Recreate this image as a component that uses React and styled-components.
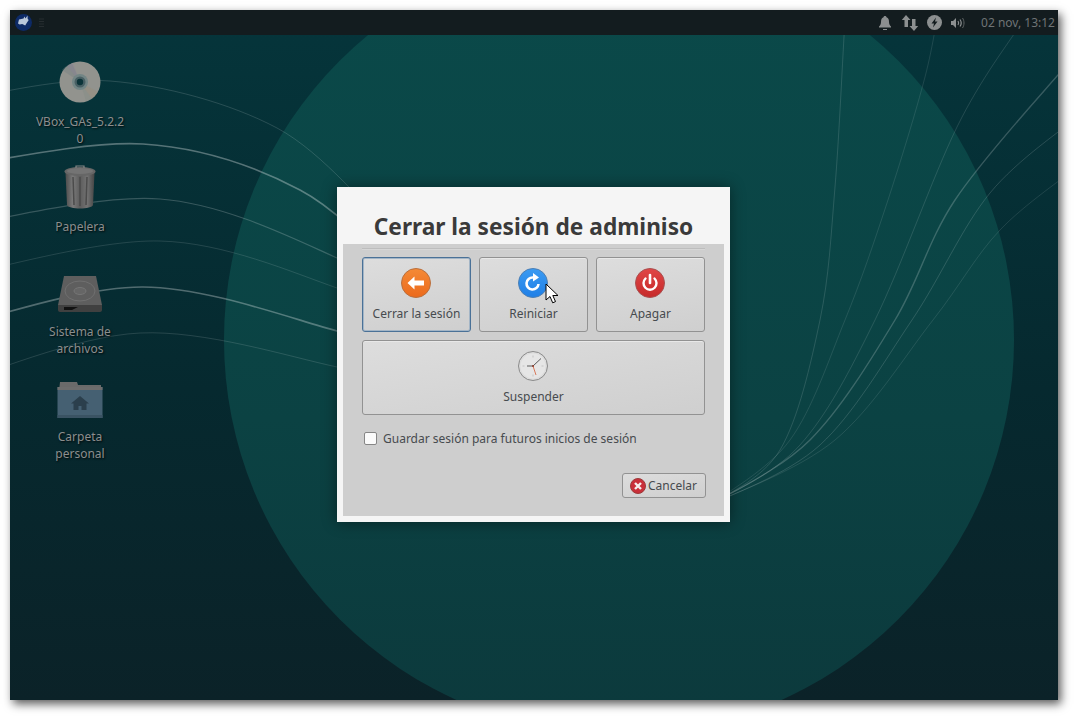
import React from "react";
import styled, { createGlobalStyle } from "styled-components";

const GlobalStyle = createGlobalStyle`
  html, body {
    margin: 0;
    padding: 0;
    background: #fff;
    overflow: hidden;
  }
`;

const Frame = styled.div`
  width: 1074px;
  height: 716px;
  padding: 10px 16px 16px 10px;
  box-sizing: border-box;
  font-family: "Noto Sans", "Open Sans", sans-serif;
`;

const Desktop = styled.div`
  position: relative;
  width: 1048px;
  height: 690px;
  display: flex;
  flex-direction: column;
  overflow: hidden;
  background: linear-gradient(180deg, #05353b 0%, #06292f 55%, #0b2228 100%);
  box-shadow: 3px 4px 9px rgba(0, 0, 0, 0.65);
`;

const Wallpaper = styled.svg`
  position: absolute;
  left: 0;
  top: 0;
`;

const Panel = styled.div`
  position: relative;
  height: 25px;
  flex: none;
  display: flex;
  align-items: center;
  justify-content: space-between;
  padding: 0 3px 0 5px;
  background: #131c1f;
`;

const PanelGroup = styled.div`
  display: flex;
  align-items: center;
  gap: ${({ $gap }) => $gap || 0}px;
`;

const Clock = styled.div`
  font-size: 12px;
  color: #6f7476;
  margin-left: 15px;
`;

const IconColumn = styled.div`
  position: relative;
  width: 100px;
  margin-left: 20px;
  padding-top: 23px;
  display: flex;
  flex-direction: column;
`;

const DesktopItem = styled.div`
  height: 105px;
  display: flex;
  flex-direction: column;
  align-items: center;
`;

const ItemIcon = styled.div`
  height: 48px;
  display: flex;
  align-items: center;
  justify-content: center;
  transform: translateY(${({ $shift }) => $shift || 0}px);
`;

const ItemLabel = styled.div`
  margin-top: 7px;
  width: 90px;
  font-size: 12px;
  line-height: 17px;
  color: #8b8e8e;
  text-align: center;
  word-break: ${({ $breakAll }) => ($breakAll ? "break-all" : "normal")};
  text-shadow: 1px 1px 2px rgba(0, 0, 0, 0.85);
`;

const Dialog = styled.div`
  position: absolute;
  left: 327px;
  top: 177px;
  width: 393px;
  height: 335px;
  box-sizing: border-box;
  padding: 0 6px 6px;
  display: flex;
  flex-direction: column;
  background: #f5f5f5;
  box-shadow: 0 0 14px rgba(0, 0, 0, 0.45);
`;

const Title = styled.div`
  height: 57px;
  flex: none;
  box-sizing: border-box;
  padding-top: 23px;
  font-size: 22.7px;
  line-height: 34px;
  font-weight: 700;
  text-align: center;
  color: #3a3a3a;
  white-space: nowrap;
`;

const DialogBody = styled.div`
  flex: 1;
  box-sizing: border-box;
  padding: 4px 19px 0;
  display: flex;
  flex-direction: column;
  background: #cecece;
`;

const Separator = styled.div`
  height: 1px;
  background: #bdbdbd;
  border-bottom: 1px solid #d6d6d6;
  margin-bottom: 7px;
`;

const ActionGrid = styled.div`
  display: grid;
  grid-template-columns: repeat(3, 109px);
  grid-auto-rows: 75px;
  gap: 8px;
`;

const ActionButton = styled.div`
  grid-column: ${({ $wide }) => ($wide ? "1 / -1" : "auto")};
  box-sizing: border-box;
  display: flex;
  flex-direction: column;
  align-items: center;
  padding-top: 10px;
  border: 1px solid ${({ $focused }) => ($focused ? "#4a7197" : "#929292")};
  border-radius: 3px;
  background: linear-gradient(170deg, #dddddd 0%, #cfcfcf 100%);
  box-shadow: ${({ $focused }) =>
    $focused ? "inset 0 0 0 1px #a3b5c6" : "inset 0 1px 0 #e8e8e8"};

  svg {
    margin-left: -1px;
  }
`;

const ActionLabel = styled.div`
  margin-top: 7px;
  font-size: 12px;
  line-height: 17px;
  color: #474b4f;
`;

const SaveRow = styled.label`
  margin: 15px 0 0 2px;
  display: flex;
  align-items: center;
  gap: 6px;
  height: 17px;
  font-size: 12px;
  color: #474b4f;
`;

const CheckBox = styled.span`
  width: 11px;
  height: 11px;
  border: 1px solid #868686;
  border-radius: 2px;
  background: #fbfbfb;
`;

const Footer = styled.div`
  margin-top: 26px;
  margin-right: -1px;
  display: flex;
  justify-content: flex-end;
`;

const CancelButton = styled.div`
  width: 84px;
  height: 25px;
  box-sizing: border-box;
  display: flex;
  align-items: center;
  padding-left: 7px;
  gap: 2px;
  border: 1px solid #929292;
  border-radius: 3px;
  background: linear-gradient(170deg, #dddddd 0%, #cfcfcf 100%);
  font-size: 12px;
  color: #474b4f;
`;

const Pointer = styled.svg`
  position: absolute;
  left: 535px;
  top: 273px;
`;

const curves = [
  // left side, passing behind the dialog
  { p: [[-60, 92], [100, 71], [267, 118], [380, 220]], o: 0.14, w: 1 },
  { p: [[-60, 158], [133, 134], [290, 180], [400, 275]], o: 0.32, w: 1.6 },
  { p: [[-60, 218], [150, 189], [327, 248], [420, 310]], o: 0.2, w: 1.2 },
  { p: [[-60, 268], [150, 231], [327, 278], [420, 325]], o: 0.12, w: 1 },
  { p: [[-60, 318], [133, 277], [327, 321], [420, 355]], o: 0.3, w: 1.6 },
  { p: [[-60, 375], [130, 323], [327, 357], [420, 385]], o: 0.13, w: 1 },
  // right side, fanning out of the dialog
  { p: [[700, 495], [770, 440], [810, 310], [825, 177], [835, 10], [838, -20]], o: 0.13, w: 1 },
  { p: [[700, 495], [780, 430], [835, 310], [877, 193], [915, 67], [930, -10]], o: 0.1, w: 1 },
  { p: [[700, 495], [790, 435], [865, 310], [947, 117], [1010, 15]], o: 0.12, w: 1 },
  { p: [[700, 495], [800, 430], [885, 310], [945, 190], [1048, 65], [1075, 40]], o: 0.2, w: 1.4 },
  { p: [[700, 495], [810, 435], [902, 310], [980, 183], [1070, 105]], o: 0.14, w: 1 },
  { p: [[700, 495], [825, 430], [923, 310], [990, 220], [1070, 155]], o: 0.1, w: 1 },
];

// smooth line through the points (catmull-rom to bezier)
const smooth = (pts) => {
  let d = `M${pts[0][0]} ${pts[0][1]}`;
  for (let i = 0; i < pts.length - 1; i++) {
    const a = pts[i - 1] || pts[i];
    const b = pts[i];
    const c = pts[i + 1];
    const e = pts[i + 2] || c;
    d += ` C${b[0] + (c[0] - a[0]) / 6} ${b[1] + (c[1] - a[1]) / 6}, ${c[0] - (e[0] - b[0]) / 6} ${c[1] - (e[1] - b[1]) / 6}, ${c[0]} ${c[1]}`;
  }
  return d;
};

const WallpaperArt = () => (
  <Wallpaper width="1048" height="690" viewBox="0 0 1048 690">
    <defs>
      <linearGradient id="disc" x1="0" y1="0" x2="0" y2="1">
        <stop offset="0" stopColor="#0a4a4a" />
        <stop offset="0.6" stopColor="#0b4243" />
        <stop offset="1" stopColor="#0c393c" />
      </linearGradient>
    </defs>
    <circle cx="609" cy="330" r="395" fill="url(#disc)" />
    {curves.map((c, i) => (
      <path key={i} d={smooth(c.p)} fill="none" stroke="#ffffff" strokeOpacity={c.o} strokeWidth={c.w} />
    ))}
  </Wallpaper>
);

const AppMenuIcon = () => (
  <svg width="17" height="17" viewBox="0 0 17 17">
    <circle cx="8.500" cy="8.500" r="8.500" fill="#0d2a66" />
    <path d="M3 9.500l1-4 4.500-1 1-2 1 2 2-3 .2 3.500 1 1-2 3-1.500 2.500-3-1.500-2.500.5z" fill="#b9c7da" />
  </svg>
);

const Handle = () => (
  <svg width="6" height="10" viewBox="0 0 6 10">
    <path d="M0 1h5M0 3.500h5M0 6h5M0 8.500h5" stroke="#262d30" strokeWidth="1" />
  </svg>
);

const BellIcon = () => (
  <svg width="14" height="16" viewBox="0 0 14 16">
    <path d="M7 1c1 0 1.400.6 1.500 1.300C10.500 3 11 5 11 7c0 2.500 1 3.500 2 4.500V12.500H1V11.500C2 10.500 3 9.500 3 7c0-2 .5-4 2.500-4.700C5.600 1.600 6 1 7 1z" fill="#8c8f90" />
    <path d="M5 14h4v1H5z" fill="#8c8f90" />
  </svg>
);

const NetworkIcon = () => (
  <svg width="18" height="18" viewBox="0 0 18 18">
    <path d="M5 1l4.500 5H7v7H3.500V6H.8z" fill="#8c8f90" />
    <path d="M13 17l-4.500-5H11V5h3.500v7h2.700z" fill="#8c8f90" />
  </svg>
);

const PowerIcon = () => (
  <svg width="15" height="15" viewBox="0 0 15 15">
    <circle cx="7.500" cy="7.500" r="7.500" fill="#8c8f90" />
    <path d="M9 2.500L4.500 8.500H7L6 12.500l4.500-6H8z" fill="#131c1f" />
  </svg>
);

const VolumeIcon = () => (
  <svg width="16" height="14" viewBox="0 0 16 14">
    <path d="M1 5h2l3-3v10L3 9H1z" fill="#8c8f90" />
    <path d="M8 5c.8 1.200.8 2.800 0 4M10 3.500c1.400 2 1.400 5 0 7" stroke="#8c8f90" strokeWidth="1.200" fill="none" />
    <path d="M12.500 2c2 2.800 2 7.200 0 10" stroke="#5f6465" strokeWidth="1" fill="none" />
  </svg>
);

const DiscIcon = () => (
  <svg width="42" height="42" viewBox="0 0 42 42">
    <circle cx="21" cy="21" r="20.500" fill="#92938e" />
    <path d="M21 21L3 9A21 21 0 0 1 13 2.500z" fill="#6f7f82" fillOpacity="0.35" />
    <path d="M21 21L8 5A21 21 0 0 1 14 2z" fill="#8a7f9c" fillOpacity="0.3" />
    <path d="M21 21L33 38A21 21 0 0 0 39 31z" fill="#9c8a6f" fillOpacity="0.3" />
    <path d="M21 21L33 38A21 21 0 0 1 27 40z" fill="#7f8a80" fillOpacity="0.3" />
    <circle cx="21" cy="21" r="8" fill="#728585" />
    <circle cx="21" cy="21" r="5.500" fill="#486064" />
    <circle cx="21" cy="21" r="3.200" fill="#0c3439" />
  </svg>
);

const TrashIcon = () => (
  <svg width="32" height="44" viewBox="0 0 32 44">
    <defs>
      <linearGradient id="can" x1="0" y1="0" x2="1" y2="0">
        <stop offset="0" stopColor="#4c4c4c" />
        <stop offset="0.25" stopColor="#7a7a7a" />
        <stop offset="0.5" stopColor="#5c5c5c" />
        <stop offset="0.75" stopColor="#737373" />
        <stop offset="1" stopColor="#454545" />
      </linearGradient>
    </defs>
    <path d="M1.500 8L3 40c.2 2 7 3.500 13 3.500S28.800 42 29 40L30.500 8z" fill="url(#can)" />
    <path d="M9 12l1 28M16 12v29M23 12l-1 28" stroke="#4b4b4b" strokeWidth="1.500" />
    <ellipse cx="16" cy="6.500" rx="15.500" ry="4.500" fill="#666666" />
    <ellipse cx="16" cy="6" rx="13" ry="3" fill="#747474" />
    <path d="M12 3V1h8v2" fill="none" stroke="#868686" strokeWidth="1.200" />
  </svg>
);

const DriveIcon = () => (
  <svg width="46" height="38" viewBox="0 0 46 38">
    <path d="M7 1h32l6 29H1z" fill="#5e5e5e" />
    <path d="M1 30h44v5c0 1-1 2-2 2H3c-1 0-2-1-2-2z" fill="#404040" />
    <ellipse cx="23" cy="16" rx="15" ry="10" fill="none" stroke="#707070" strokeWidth="1" />
    <ellipse cx="23" cy="16" rx="6" ry="3.500" fill="#666666" stroke="#767676" />
    <path d="M7 32h14l-6 3H7z" fill="#111" />
  </svg>
);

const FolderIcon = () => (
  <svg width="46" height="38" viewBox="0 0 46 38">
    <path d="M3 1h17l1 3h23v6H2z" fill="#6a6a6a" />
    <rect x="0.500" y="6" width="45" height="31" fill="#456072" />
    <rect x="0.500" y="6" width="45" height="3" fill="#6d6d6d" />
    <rect x="0.500" y="34" width="45" height="3" fill="#3a5363" />
    <path d="M23 15l-9 7.500h2.500V29h5v-4h3v4h5v-6.500H32z" fill="#2b3f4c" />
  </svg>
);

const LogoutIcon = () => (
  <svg width="30" height="30" viewBox="0 0 30 30">
    <defs>
      <linearGradient id="orange" x1="0" y1="0" x2="0" y2="1">
        <stop offset="0" stopColor="#f48a36" />
        <stop offset="1" stopColor="#ec6a1c" />
      </linearGradient>
    </defs>
    <circle cx="15" cy="15" r="14.500" fill="url(#orange)" stroke="#b8703f" strokeWidth="1" />
    <path d="M6.500 15l7-6.500V12.500H23v5H13.500v4z" fill="#fff" />
  </svg>
);

const RebootIcon = () => (
  <svg width="30" height="30" viewBox="0 0 30 30">
    <defs>
      <linearGradient id="blue" x1="0" y1="0" x2="0" y2="1">
        <stop offset="0" stopColor="#3b9bf2" />
        <stop offset="1" stopColor="#1f7fe6" />
      </linearGradient>
    </defs>
    <circle cx="15" cy="15" r="14.500" fill="url(#blue)" stroke="#4d7fb3" strokeWidth="1" />
    <path d="M20.500 16a6 6 0 1 1-5.500-6.500" fill="none" stroke="#fff" strokeWidth="2.600" />
    <path d="M15 5l6 4.500-6 4z" fill="#fff" />
  </svg>
);

const ShutdownIcon = () => (
  <svg width="30" height="30" viewBox="0 0 30 30">
    <defs>
      <linearGradient id="red" x1="0" y1="0" x2="0" y2="1">
        <stop offset="0" stopColor="#e04646" />
        <stop offset="1" stopColor="#c62a2a" />
      </linearGradient>
    </defs>
    <circle cx="15" cy="15" r="14.500" fill="url(#red)" stroke="#a85050" strokeWidth="1" />
    <path d="M10.500 10.500a6.500 6.500 0 1 0 9 0" fill="none" stroke="#fff" strokeWidth="2.400" strokeLinecap="round" />
    <path d="M15 7v8" stroke="#fff" strokeWidth="2.600" strokeLinecap="round" />
  </svg>
);

const ClockIcon = () => (
  <svg width="30" height="30" viewBox="0 0 30 30">
    <circle cx="15" cy="15" r="14.500" fill="#dcdcdc" stroke="#8a8a8a" strokeWidth="1" />
    <circle cx="15" cy="15" r="12.500" fill="#e6e6e6" />
    <path d="M15 4.500v2M15 23.500v2M4.500 15h2M23.500 15h2" stroke="#c2c2c2" strokeWidth="1" />
    <path d="M15 15L23 7.500M15 15H9" stroke="#5a5a5a" strokeWidth="1" />
    <path d="M15 15l3 9" stroke="#d8785a" strokeWidth="1" />
    <circle cx="15" cy="15" r="1" fill="#8a3a2a" />
  </svg>
);

const CancelIcon = () => (
  <svg width="16" height="16" viewBox="0 0 16 16">
    <circle cx="8" cy="8" r="7.500" fill="#c9303a" stroke="#9c3a3a" strokeWidth="1" />
    <path d="M5 5l6 6M11 5l-6 6" stroke="#f5eeee" strokeWidth="2.400" />
  </svg>
);

const Cursor = () => (
  <Pointer width="14" height="22" viewBox="0 0 14 22">
    <path d="M1 1v16l4-3.500 2.700 6.300 2.800-1.200L7.800 12.500H13z" fill="#fff" stroke="#000" strokeWidth="1" strokeLinejoin="round" />
  </Pointer>
);

const App = () => {
  return (
    <Frame>
      <GlobalStyle />
      <Desktop>
        <WallpaperArt />
        <Panel>
          <PanelGroup $gap={7}>
            <AppMenuIcon />
            <Handle />
          </PanelGroup>
          <PanelGroup>
            <PanelGroup $gap={9}>
              <BellIcon />
              <NetworkIcon />
            </PanelGroup>
            <PanelGroup $gap={8}>
              <span />
              <PowerIcon />
              <VolumeIcon />
            </PanelGroup>
            <Clock>02 nov, 13:12</Clock>
          </PanelGroup>
        </Panel>
        <IconColumn>
          <DesktopItem>
            <ItemIcon><DiscIcon /></ItemIcon>
            <ItemLabel $breakAll>VBox_GAs_5.2.20</ItemLabel>
          </DesktopItem>
          <DesktopItem>
            <ItemIcon><TrashIcon /></ItemIcon>
            <ItemLabel>Papelera</ItemLabel>
          </DesktopItem>
          <DesktopItem>
            <ItemIcon $shift={2}><DriveIcon /></ItemIcon>
            <ItemLabel>Sistema de archivos</ItemLabel>
          </DesktopItem>
          <DesktopItem>
            <ItemIcon $shift={3}><FolderIcon /></ItemIcon>
            <ItemLabel>Carpeta personal</ItemLabel>
          </DesktopItem>
        </IconColumn>
        <Dialog>
          <Title>Cerrar la sesión de adminiso</Title>
          <DialogBody>
            <Separator />
            <ActionGrid>
              <ActionButton $focused>
                <LogoutIcon />
                <ActionLabel>Cerrar la sesión</ActionLabel>
              </ActionButton>
              <ActionButton>
                <RebootIcon />
                <ActionLabel>Reiniciar</ActionLabel>
              </ActionButton>
              <ActionButton>
                <ShutdownIcon />
                <ActionLabel>Apagar</ActionLabel>
              </ActionButton>
              <ActionButton $wide>
                <ClockIcon />
                <ActionLabel>Suspender</ActionLabel>
              </ActionButton>
            </ActionGrid>
            <SaveRow>
              <CheckBox />
              Guardar sesión para futuros inicios de sesión
            </SaveRow>
            <Footer>
              <CancelButton>
                <CancelIcon />
                Cancelar
              </CancelButton>
            </Footer>
          </DialogBody>
        </Dialog>
        <Cursor />
      </Desktop>
    </Frame>
  );
};

export default App;
